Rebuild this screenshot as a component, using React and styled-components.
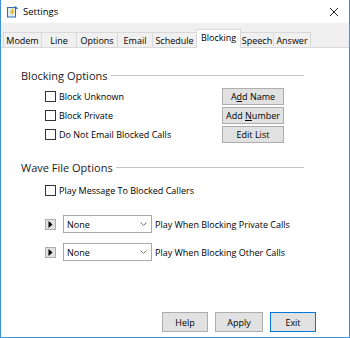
import React from "react"
import styled, { createGlobalStyle } from "styled-components"

const GlobalStyle = createGlobalStyle`
  html, body {
    margin: 0;
    padding: 0;
    background: #fff;
  }
  body {
    font-family: "Open Sans", "Liberation Sans", sans-serif;
    font-size: 9px;
    color: #000;
  }
`

const tabs = [
  { label: "Modem", width: 39 },
  { label: "Line", width: 36 },
  { label: "Options", width: 42 },
  { label: "Email", width: 36 },
  { label: "Schedule", width: 45 },
  { label: "Blocking", width: 45, active: true },
  { label: "Speech", width: 34 },
  { label: "Answer", width: 38 },
]

const Window = styled.div`
  width: 350px;
  height: 338px;
  box-sizing: border-box;
  border: 1px solid #3e92dc;
  border-top: none;
  display: flex;
  flex-direction: column;
  background: #fff;
  overflow: hidden;
`

const TitleBar = styled.div`
  height: 23px;
  flex-shrink: 0;
  display: flex;
  align-items: center;
  padding-left: 5px;
  gap: 5px;
  font-size: 9.5px;
`

const CloseButton = styled.div`
  margin-left: auto;
  width: 30px;
  height: 23px;
  display: flex;
  align-items: center;
  justify-content: center;
`

const TabStrip = styled.div`
  height: 24px;
  flex-shrink: 0;
  background: #f0f0f0;
  display: flex;
  align-items: flex-end;
  padding-left: 2px;
`

const Tab = styled.div`
  box-sizing: border-box;
  width: ${p => p.width}px;
  height: ${p => (p.active ? 19 : 15)}px;
  margin-right: -1px;
  margin-bottom: ${p => (p.active ? -1 : 0)}px;
  border: 1px solid #d9d9d9;
  border-bottom: none;
  background: ${p => (p.active ? "#fff" : "#f0f0f0")};
  display: flex;
  align-items: center;
  justify-content: center;
  padding-bottom: ${p => (p.active ? 3 : 0)}px;
  position: relative;
  z-index: ${p => (p.active ? 1 : 0)};
  line-height: 1;
`

const Panel = styled.div`
  flex: 1;
  border-top: 1px solid #d9d9d9;
  display: flex;
  flex-direction: column;
  padding: 19px 33px 5px 0;
`

const GroupTitle = styled.div`
  display: flex;
  align-items: center;
  gap: 3px;
  padding-left: 20px;
  height: 16px;
  font-size: 11px;
  color: #1a1a1a;
  margin-top: ${p => p.top || 0}px;
  &::after {
    content: "";
    flex: 1;
    border-top: 1px solid #c4c4c4;
    margin-top: 1px;
    margin-right: 12px;
  }
`

const OptionGrid = styled.div`
  display: grid;
  grid-template-columns: 177px 62px;
  grid-auto-rows: 19px;
  align-items: center;
  padding-left: 44px;
  margin-top: 4px;
`

const CheckRow = styled.label`
  display: flex;
  align-items: center;
  gap: 3px;
  height: 19px;
  padding-left: ${p => p.indent || 0}px;
  margin-top: ${p => p.top || 0}px;
`

const Box = styled.span`
  width: 11px;
  height: 11px;
  box-sizing: border-box;
  border: 1px solid #333;
  background: #fff;
  flex-shrink: 0;
`

const Button = styled.div`
  box-sizing: border-box;
  width: ${p => p.width || 62}px;
  height: ${p => p.height || 17}px;
  border: 1px solid ${p => (p.focused ? "#0078d7" : "#adadad")};
  background: #e1e1e1;
  display: flex;
  align-items: center;
  justify-content: center;
  line-height: 1;
  white-space: pre;
  u {
    text-underline-offset: 1px;
  }
`

const WaveRow = styled.div`
  display: flex;
  align-items: center;
  padding-left: 44px;
  height: 18px;
  margin-top: ${p => p.top}px;
`

const PlayButton = styled.div`
  width: 11px;
  height: 11px;
  box-sizing: border-box;
  border: 1px solid #adadad;
  background: #e1e1e1;
  display: flex;
  align-items: center;
  justify-content: center;
  margin-right: 7px;
`

const Select = styled.div`
  box-sizing: border-box;
  width: 89px;
  height: 18px;
  border: 1px solid #a8a8a8;
  background: #fff;
  display: flex;
  align-items: center;
  padding: 0 4px 0 3px;
  margin-right: 3px;
  span {
    flex: 1;
  }
`

const Footer = styled.div`
  margin-top: auto;
  display: flex;
  justify-content: flex-end;
  gap: 7px;
`

const AppIcon = () => (
  <svg width="12" height="12" viewBox="0 0 12 12">
    <rect x="1.5" y="1.5" width="8" height="9.5" fill="#dbeefb" stroke="#2a6fb5" />
    <path d="M6.5 2.5 L4 7 H6 L5 10 L8.5 5 H6.5 L8 2.5 Z" fill="#f0b400" />
    <path d="M9 0.5 L11.5 3" stroke="#2a6fb5" strokeWidth="1.2" />
  </svg>
)

const CloseIcon = () => (
  <svg width="10" height="10" viewBox="0 0 10 10">
    <path d="M1 1 L9 9 M9 1 L1 9" stroke="#222" strokeWidth="1" />
  </svg>
)

const Triangle = () => (
  <svg width="5" height="7" viewBox="0 0 5 7">
    <path d="M0.5 0 L4.5 3.5 L0.5 7 Z" fill="#000" />
  </svg>
)

const Chevron = () => (
  <svg width="7" height="5" viewBox="0 0 7 5">
    <path d="M0.5 0.5 L3.5 3.5 L6.5 0.5" stroke="#777" fill="none" strokeWidth="1" />
  </svg>
)

const Check = ({ children, indent, top }) => (
  <CheckRow indent={indent} top={top}>
    <Box />
    {children}
  </CheckRow>
)

const WaveFile = ({ label, top }) => (
  <WaveRow top={top}>
    <PlayButton>
      <Triangle />
    </PlayButton>
    <Select>
      <span>None</span>
      <Chevron />
    </Select>
    {label}
  </WaveRow>
)

export default function App() {
  return (
    <>
      <GlobalStyle />
      <Window>
        <TitleBar>
          <AppIcon />
          Settings
          <CloseButton>
            <CloseIcon />
          </CloseButton>
        </TitleBar>
        <TabStrip>
          {tabs.map(t => (
            <Tab key={t.label} width={t.width} active={t.active}>
              {t.label}
            </Tab>
          ))}
        </TabStrip>
        <Panel>
          <GroupTitle>Blocking Options</GroupTitle>
          <OptionGrid>
            <Check>Block Unknown</Check>
            <Button>
              <span>
                A<u>d</u>d Name
              </span>
            </Button>
            <Check>Block Private</Check>
            <Button>
              <span>
                Add <u>N</u>umber
              </span>
            </Button>
            <Check>Do Not Email Blocked Calls</Check>
            <Button>Edit List</Button>
          </OptionGrid>

          <GroupTitle top={15}>Wave File Options</GroupTitle>
          <Check indent={44} top={6}>
            Play Message To Blocked Callers
          </Check>
          <WaveFile top={15} label="Play When Blocking Private Calls" />
          <WaveFile top={10} label="Play When Blocking Other Calls" />

          <Footer>
            <Button width={46} height={20}>Help</Button>
            <Button width={48} height={20}>Apply</Button>
            <Button width={46} height={20} focused>
              Exit
            </Button>
          </Footer>
        </Panel>
      </Window>
    </>
  )
}
